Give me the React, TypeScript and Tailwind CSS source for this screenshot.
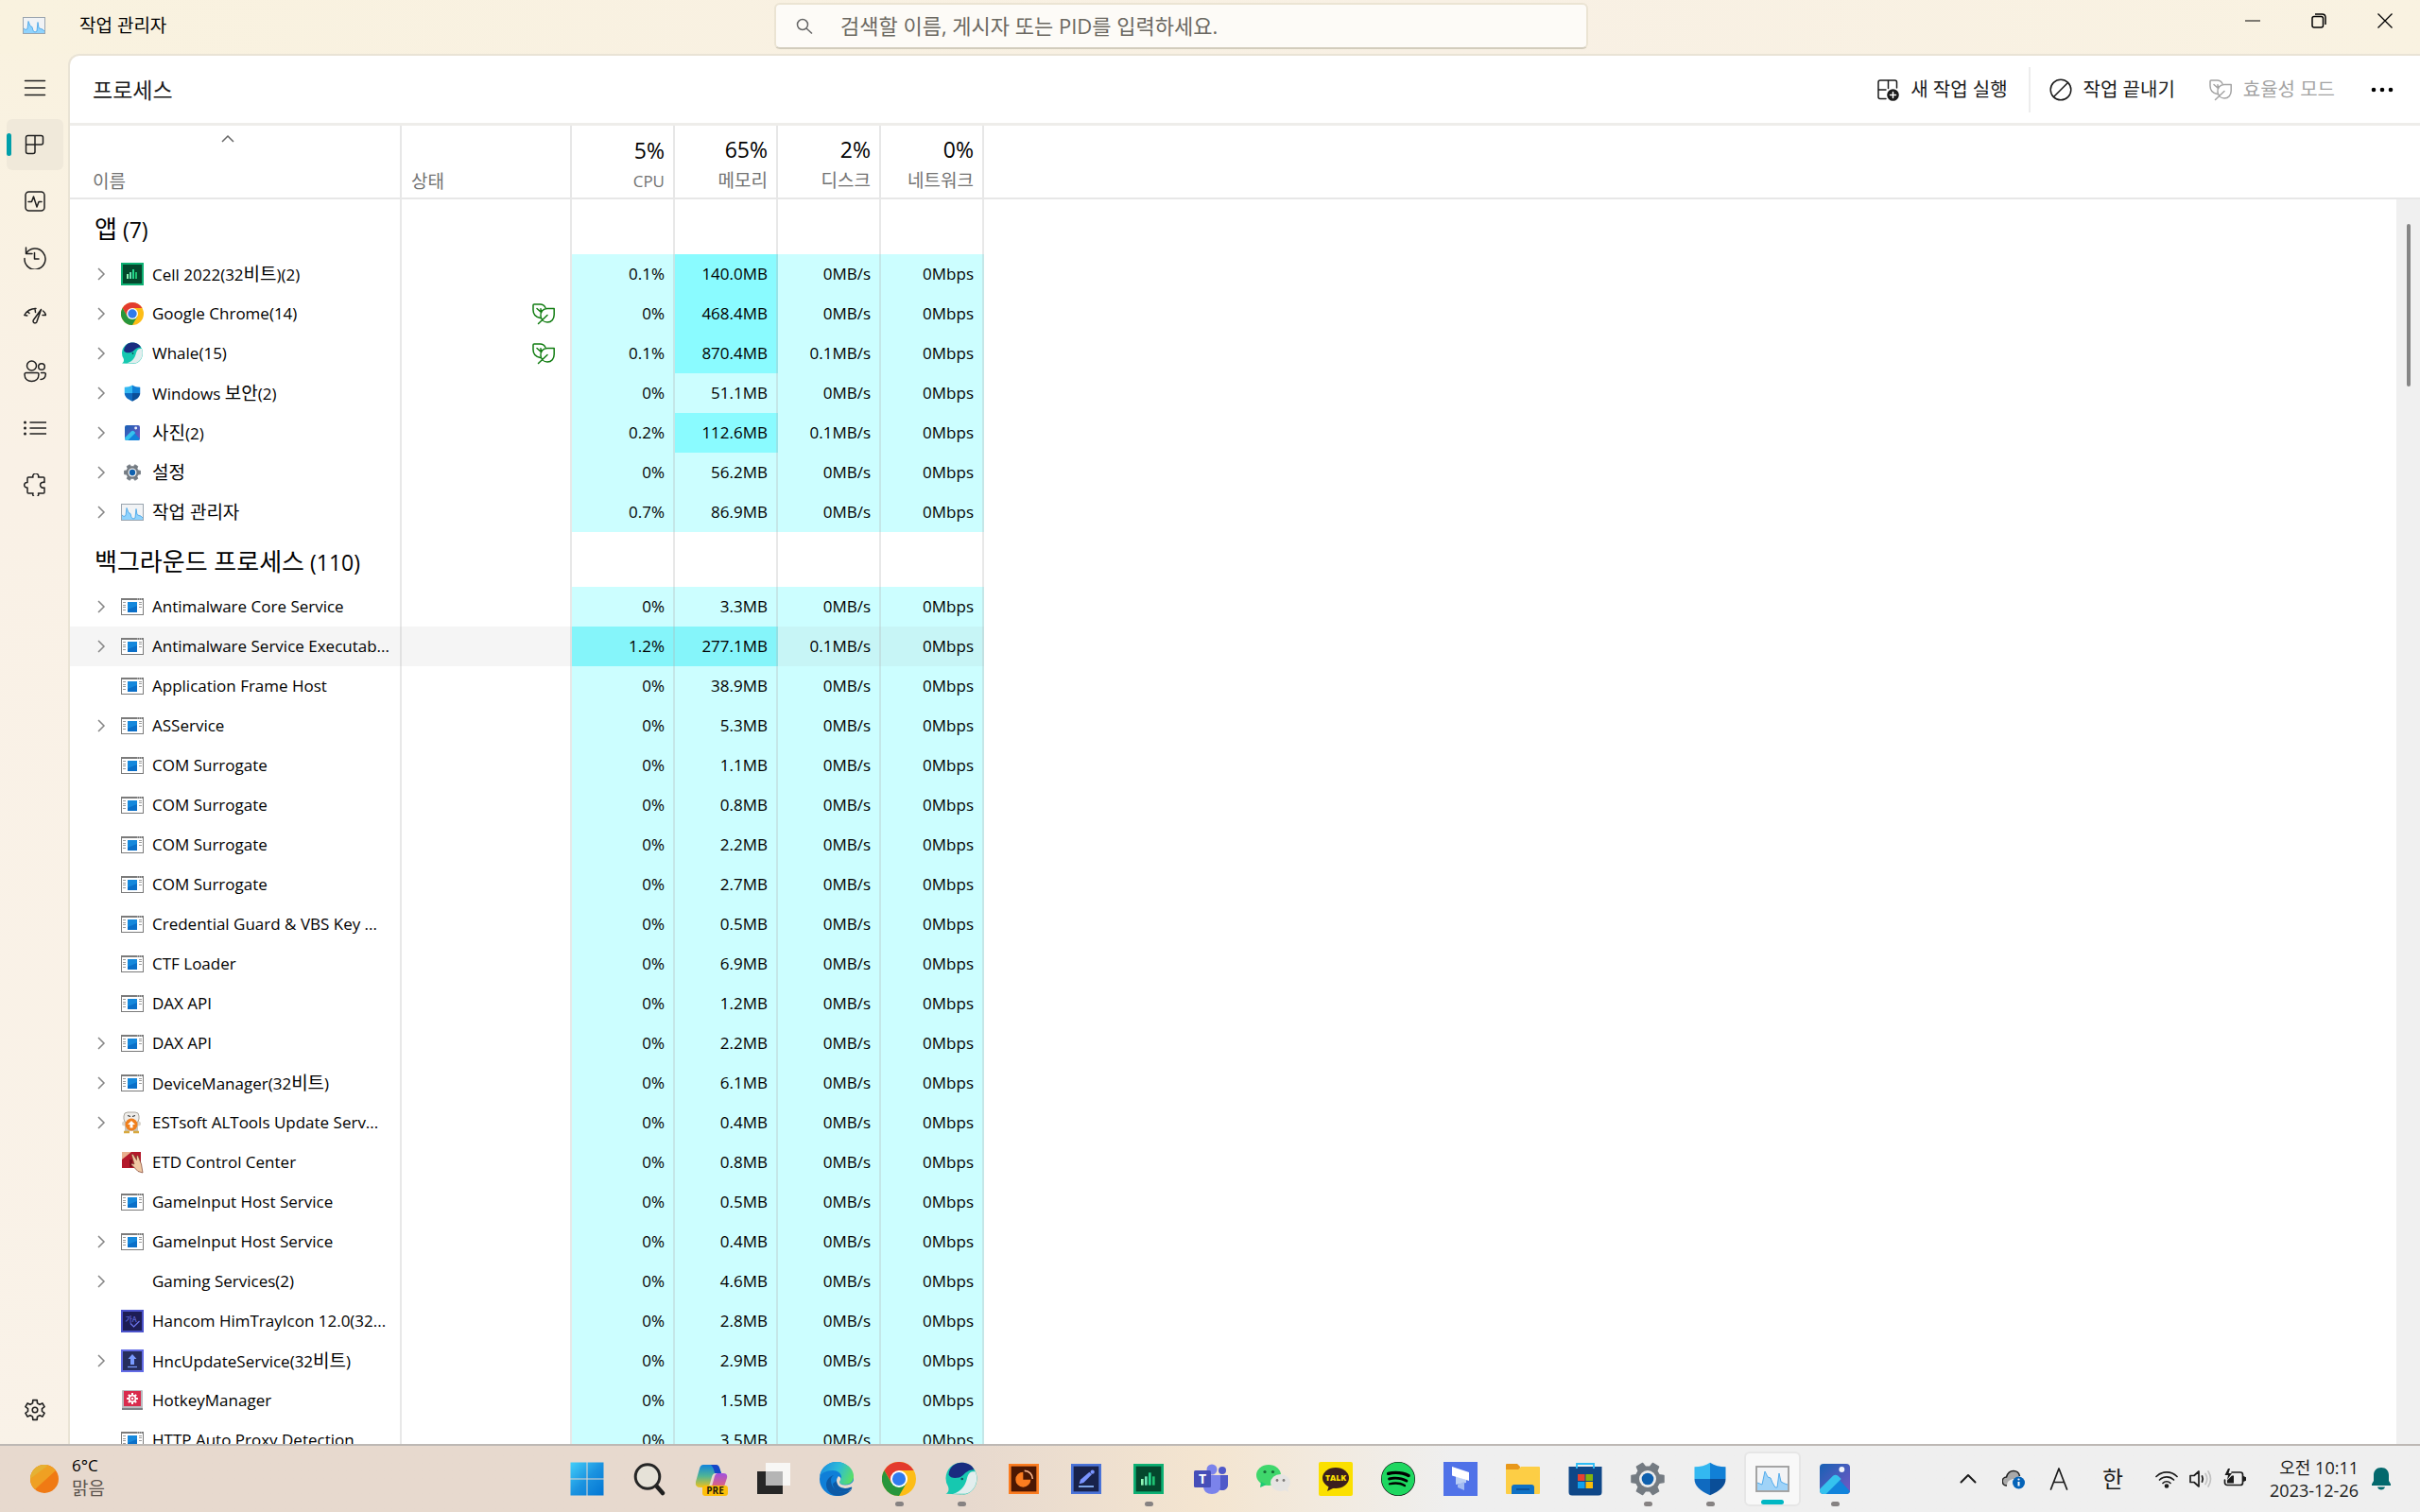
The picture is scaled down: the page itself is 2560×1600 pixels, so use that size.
import React, { useState } from "react";
import { FaSpotify } from "react-icons/fa";

type IconProps = {
  className?: string;
};

type ProcessProps = {
  name: string;
  icon: string;
  expandable?: boolean;
  eco?: boolean;
  cpu: string;
  memory: string;
  disk?: string;
  network?: string;
  hovered?: boolean;
};

const apps: ProcessProps[] = [
  { name: "Cell 2022(32비트)(2)", icon: "cell", expandable: true, cpu: "0.1%", memory: "140.0MB" },
  { name: "Google Chrome(14)", icon: "chrome", expandable: true, eco: true, cpu: "0%", memory: "468.4MB" },
  { name: "Whale(15)", icon: "whale", expandable: true, eco: true, cpu: "0.1%", memory: "870.4MB", disk: "0.1MB/s" },
  { name: "Windows 보안(2)", icon: "shield", expandable: true, cpu: "0%", memory: "51.1MB" },
  { name: "사진(2)", icon: "photos", expandable: true, cpu: "0.2%", memory: "112.6MB", disk: "0.1MB/s" },
  { name: "설정", icon: "gear", expandable: true, cpu: "0%", memory: "56.2MB" },
  { name: "작업 관리자", icon: "taskmgr", expandable: true, cpu: "0.7%", memory: "86.9MB" },
];

const background: ProcessProps[] = [
  { name: "Antimalware Core Service", icon: "exe", expandable: true, cpu: "0%", memory: "3.3MB" },
  { name: "Antimalware Service Executab...", icon: "exe", expandable: true, cpu: "1.2%", memory: "277.1MB", disk: "0.1MB/s", hovered: true },
  { name: "Application Frame Host", icon: "exe", cpu: "0%", memory: "38.9MB" },
  { name: "ASService", icon: "exe", expandable: true, cpu: "0%", memory: "5.3MB" },
  { name: "COM Surrogate", icon: "exe", cpu: "0%", memory: "1.1MB" },
  { name: "COM Surrogate", icon: "exe", cpu: "0%", memory: "0.8MB" },
  { name: "COM Surrogate", icon: "exe", cpu: "0%", memory: "2.2MB" },
  { name: "COM Surrogate", icon: "exe", cpu: "0%", memory: "2.7MB" },
  { name: "Credential Guard & VBS Key ...", icon: "exe", cpu: "0%", memory: "0.5MB" },
  { name: "CTF Loader", icon: "exe", cpu: "0%", memory: "6.9MB" },
  { name: "DAX API", icon: "exe", cpu: "0%", memory: "1.2MB" },
  { name: "DAX API", icon: "exe", expandable: true, cpu: "0%", memory: "2.2MB" },
  { name: "DeviceManager(32비트)", icon: "exe", expandable: true, cpu: "0%", memory: "6.1MB" },
  { name: "ESTsoft ALTools Update Serv...", icon: "altools", expandable: true, cpu: "0%", memory: "0.4MB" },
  { name: "ETD Control Center", icon: "etd", cpu: "0%", memory: "0.8MB" },
  { name: "GameInput Host Service", icon: "exe", cpu: "0%", memory: "0.5MB" },
  { name: "GameInput Host Service", icon: "exe", expandable: true, cpu: "0%", memory: "0.4MB" },
  { name: "Gaming Services(2)", icon: "none", expandable: true, cpu: "0%", memory: "4.6MB" },
  { name: "Hancom HimTrayIcon 12.0(32...", icon: "him", cpu: "0%", memory: "2.8MB" },
  { name: "HncUpdateService(32비트)", icon: "hnc", expandable: true, cpu: "0%", memory: "2.9MB" },
  { name: "HotkeyManager", icon: "hotkey", cpu: "0%", memory: "1.5MB" },
  { name: "HTTP Auto Proxy Detection", icon: "exe", cpu: "0%", memory: "3.5MB" },
];

const gearPath = (teeth: number, outer: number, inner: number) => {
  const step = (Math.PI * 2) / teeth;
  const points: string[] = [];
  for (let i = 0; i < teeth; i++) {
    const a = i * step - Math.PI / 2;
    [
      [-0.32, inner],
      [-0.2, outer],
      [0.2, outer],
      [0.32, inner],
    ].forEach(([offset, r]) => {
      const t = a + offset * step;
      points.push(`${(12 + r * Math.cos(t)).toFixed(2)} ${(12 + r * Math.sin(t)).toFixed(2)}`);
    });
  }
  return `M${points.join("L")}Z`;
};

/* line icons */

function Line({ className = "size-6", children, width = 1.5 }: { className?: string; children: React.ReactNode; width?: number }) {
  return (
    <svg
      viewBox="0 0 24 24"
      className={className}
      fill="none"
      stroke="currentColor"
      strokeWidth={width}
      strokeLinecap="round"
      strokeLinejoin="round"
      aria-hidden="true"
    >
      {children}
    </svg>
  );
}

const MenuIcon = () => (
  <Line>
    <path d="M1.5 4.5h21M1.5 12h21M1.5 19.5h21" />
  </Line>
);

const ProcessesIcon = () => (
  <Line>
    <path d="M2.5 4.5a2 2 0 0 1 2-2h14a2 2 0 0 1 2 2V10a2 2 0 0 1-2 2H12v7.5a2 2 0 0 1-2 2H4.5a2 2 0 0 1-2-2zM2.5 12H12M12 2.5V12" />
  </Line>
);

const PerformanceIcon = () => (
  <Line>
    <rect x="2" y="2" width="20" height="20" rx="3.5" />
    <path d="M5 12.500h3.500l2-5.500 3.500 11 2-5.500h3" />
  </Line>
);

const HistoryIcon = () => (
  <Line>
    <path d="M2.500 1v6.500H9M2.500 7.500A11 11 0 1 1 1 12.500M11.500 6.500V13H16" />
  </Line>
);

const StartupIcon = () => (
  <Line>
    <path d="M.8 12.500l3 .5M.8 12.500C3 8.500 7 5.500 13 5.500M4 8.500l2 2M12 5.500l.500 4M20.500 8c1.500 1 2.500 2.500 3 4.500l-3.500 0" />
    <path d="M18.500 6.500L10.300 17.800a2 2 0 0 0 3.500 2z" />
  </Line>
);

const UsersIcon = () => (
  <Line>
    <circle cx="8.5" cy="6" r="5" />
    <circle cx="19" cy="7" r="3.3" />
    <path d="M2.500 13.500h12a1.500 1.500 0 0 1 1.500 1.500c0 5-3.500 7.500-7.500 7.500S1 20 1 15a1.500 1.500 0 0 1 1.500-1.500zM18.500 13.500H22a1.300 1.300 0 0 1 1.300 1.500c-.3 4-3 5.500-5.300 5.500" />
  </Line>
);

const DetailsIcon = () => (
  <Line>
    <path d="M7 6h17M7 12h17M7 18h17" />
    <g fill="currentColor" stroke="none">
      <circle cx="1.5" cy="6" r="1.5" />
      <circle cx="1.5" cy="12" r="1.5" />
      <circle cx="1.5" cy="18" r="1.5" />
    </g>
  </Line>
);

const ServicesIcon = () => (
  <Line>
    <path d="M5 4h5a3 2.800 0 1 1 5.500 0h5.500a1 1 0 0 1 1 1v4.500a3.200 3 0 1 0 0 5.500v5a1 1 0 0 1-1 1h-5.500a3 2.800 0 1 1-5.500 0H5a1 1 0 0 1-1-1v-5a2.800 2.800 0 1 1 0-5.500V5a1 1 0 0 1 1-1z" />
  </Line>
);

const SettingsIcon = () => (
  <Line>
    <path d={gearPath(6, 10.6, 7.6)} strokeWidth="1.6" />
    <circle cx="12" cy="12" r="2.8" />
  </Line>
);

const LeafIcon = ({ className }: IconProps) => (
  <Line className={className}>
    <path d="M8.500 16.500C3.500 15.500 1 12.500 1 8V3a1 1 0 0 1 1-1h6.500c2.500 0 4.500 1.500 5.500 3.500" />
    <path d="M5 6.500l4.500 4M9 6.800l.5 3.700M23.200 6.500H16c-4.500 0-7.500 3.500-7 8 .4 3.500 3 6.500 7 6.500 4.500 0 7.200-3.500 7.200-8zM6.500 22.500l9.500-9" />
  </Line>
);

const NewTaskIcon = () => (
  <Line>
    <path d="M10 21.500H4a2 2 0 0 1-2-2V4a2 2 0 0 1 2-2h15.500a2 2 0 0 1 2 2v6M2 12h8M12.500 2v8.500" />
    <circle cx="17.5" cy="17.5" r="6.3" fill="currentColor" stroke="none" />
    <path d="M17.500 14.500v6M14.500 17.500h6" stroke="#fff" />
  </Line>
);

const EndTaskIcon = () => (
  <Line>
    <circle cx="12" cy="12" r="10.8" />
    <path d="M4.500 19.500l15-15" />
  </Line>
);

const Chevron = () => (
  <svg viewBox="0 0 12 16" className="h-4 w-3" fill="none" stroke="#858585" strokeWidth="1.5" aria-hidden="true">
    <path d="M2 2l6 6-6 6" />
  </svg>
);

/* colour icons */

const TaskManagerLogo = ({ className = "size-6" }: IconProps) => (
  <svg viewBox="0 0 24 24" className={className} aria-hidden="true">
    <rect x=".5" y="3.5" width="23" height="17" fill="#f1f3f5" stroke="#9aa5af" />
    <path d="M1 15l2 1.500 2-1 1-8 2 5 2 1 1 4 2 1.500 2-1 1-9.500 1 6 2 1 2 .500 2 2V20H1z" fill="#8fd3fd" />
    <path d="M1 15l2 1.500 2-1 1-8 2 5 2 1 1 4 2 1.500 2-1 1-9.500 1 6 2 1 2 .500 2 2" fill="none" stroke="#3f9fe6" strokeWidth=".8" />
  </svg>
);

const ExeLogo = ({ className = "size-6" }: IconProps) => (
  <svg viewBox="0 0 24 24" className={className} aria-hidden="true">
    <rect x=".5" y="3.5" width="23" height="17" fill="#fff" stroke="#7b7b7b" />
    <path d="M0 3h24v2H0z" fill="#7b7b7b" />
    <path d="M17 4h1M19 4h1M21 4h1" stroke="#ddd" />
    <path d="M2 7.500h3M2 10.500h3M2 12.500h3M2 15.500h3M19 7.500h3M19 9.500h3M19 12.500h3" stroke="#9a9a9a" />
    <rect x="7" y="7" width="10" height="11" fill="#0a6fc8" />
    <path d="M7 7h10v4L7 15z" fill="#1588dc" />
  </svg>
);

const CellLogo = ({ className = "size-6" }: IconProps) => (
  <svg viewBox="0 0 24 24" className={className} aria-hidden="true">
    <path d="M0 0h24v24H0z" fill="#0db073" />
    <path d="M2 2h20v20H2z" fill="#04482d" />
    <path d="M6 12h2v5H6z" fill="#8df5b4" />
    <path d="M9 10h2v7H9z" fill="#6be3b4" />
    <path d="M12 7h2v10h-2z" fill="#24d68c" />
    <path d="M15 10h2v7h-2z" fill="#1fc271" />
  </svg>
);

const ShowLogo = ({ className }: IconProps) => (
  <svg viewBox="0 0 24 24" className={className} aria-hidden="true">
    <path d="M0 0h24v24H0z" fill="#fb7c20" />
    <path d="M2 2h20v20H2z" fill="#4b1703" />
    <path d="M11.500 6.500v6h6a6 6 0 1 1-6-6z" fill="#fb7c20" />
    <path d="M12.500 5.500a6.500 6.500 0 0 1 6.500 6.500" fill="none" stroke="#fbb489" strokeWidth="1.2" />
  </svg>
);

const WordLogo = ({ className }: IconProps) => (
  <svg viewBox="0 0 24 24" className={className} aria-hidden="true">
    <path d="M0 0h24v24H0z" fill="#4a73d8" />
    <path d="M2 2h20v20H2z" fill="#18224b" />
    <path d="M6.500 16l1-3.500 7-6 2 2-6.500 6.500z" fill="#7a94ff" />
    <circle cx="17" cy="6.500" r="1.600" fill="#7a94ff" />
    <path d="M6 18h12" stroke="#8cb9ff" strokeWidth="1.3" />
  </svg>
);

const ChromeLogo = ({ className = "size-6" }: IconProps) => (
  <svg viewBox="0 0 24 24" className={className} aria-hidden="true">
    <circle cx="12" cy="12" r="12" fill="#fdbd16" />
    <path d="M12 6h10.400A12 12 0 0 0 1.600 6L7 15z" fill="#e33b2e" />
    <path d="M1.600 6A12 12 0 0 0 12 24l5.200-9H12L6.800 15z" fill="#27963c" />
    <circle cx="12" cy="12" r="6" fill="#fff" />
    <circle cx="12" cy="12" r="4.7" fill="#2f7bee" />
  </svg>
);

const WhaleLogo = ({ className = "size-6" }: IconProps) => (
  <svg viewBox="0 0 24 24" className={className} aria-hidden="true">
    <path d="M1 11.500a11 11 0 0 1 22 0c0 6-4 11-9 11.500L1 22.500c2-1 2.500-3 1.500-5.500Q1 15 1 11.500z" fill="#16c8b0" />
    <path d="M22 7c2.500 7-1 14-7 15.500H6c7-2 9-7 10-11s3-5 6-4.500z" fill="#e2eeee" />
    <path d="M3 9C3.500 3 8 .5 12 .5S19.500 2 21 5.500c-4 0-6 2-8 4S4.500 12.500 3 9z" fill="#1a2c80" />
    <circle cx="12.500" cy="12" r=".9" fill="#0d5560" />
  </svg>
);

const ShieldLogo = ({ className = "size-6" }: IconProps) => (
  <svg viewBox="0 0 24 24" className={className} aria-hidden="true">
    <path d="M12 .5v11.500H1V3.500C5 3.500 9 2.500 12 .5z" fill="#33b8f1" />
    <path d="M12 .5v11.500h11V3.500C19 3.500 15 2.500 12 .5z" fill="#1180d6" />
    <path d="M1 12h11v11.500C5 20.500 1 17 1 12z" fill="#0f6ac0" />
    <path d="M23 12H12v11.500C19 20.500 23 17 23 12z" fill="#0a4e98" />
  </svg>
);

const PhotosLogo = ({ className = "size-6" }: IconProps) => (
  <svg viewBox="0 0 24 24" className={className} aria-hidden="true">
    <defs>
      <linearGradient id="photos" x1="0" y1="0" x2="1" y2="1">
        <stop offset="0" stopColor="#1761b4" />
        <stop offset="1" stopColor="#7758c5" />
      </linearGradient>
      <clipPath id="photosClip">
        <rect width="24" height="24" rx="3" />
      </clipPath>
    </defs>
    <g clipPath="url(#photosClip)">
      <path d="M0 0h24v24H0z" fill="url(#photos)" />
      <path d="M11 10.500l2.500 0L26 24H4z" fill="#1183db" />
      <path d="M-1 21L10.500 9.500q2-1.500 4 0l2.500 2.500L5 24H0z" fill="#35c2ee" />
    </g>
    <circle cx="17.5" cy="4.5" r="2.2" fill="#f0f3fb" />
  </svg>
);

const GearLogo = ({ className = "size-6" }: IconProps) => (
  <svg viewBox="0 0 24 24" className={className} aria-hidden="true">
    <g transform="rotate(30 12 12)">
      <path d={gearPath(6, 11.6, 8.6)} fill="#747b82" stroke="#747b82" strokeLinejoin="round" />
    </g>
    <circle cx="12" cy="12" r="6" fill="#ededed" />
    <circle cx="12" cy="12" r="4.2" fill="#0e60ae" />
  </svg>
);

const AltoolsLogo = () => (
  <svg viewBox="0 0 24 24" className="size-6" aria-hidden="true">
    <circle cx="3.500" cy="13" r="2.500" fill="#d8d4cc" />
    <circle cx="18.500" cy="13" r="2.500" fill="#d8d4cc" />
    <path d="M4 10h14v11H4z" fill="#c9c4ba" />
    <rect x="3" y="1" width="16" height="11" rx="4" fill="#efedea" stroke="#aaa59c" />
    <path d="M3 22h6M13 22h6" stroke="#d8a93e" strokeWidth="2.5" />
    <circle cx="11" cy="14" r="6.5" fill="#f07f1c" />
    <path d="M11 10l4 4h-2.500v3.500h-3V14H7z" fill="#fff" />
    <path d="M7 4.500l3 1M12 5.500l3-1" stroke="#333" strokeWidth="1.3" />
  </svg>
);

const EtdLogo = () => (
  <svg viewBox="0 0 24 24" className="size-6" aria-hidden="true">
    <path d="M1 1h20v17H1z" fill="#b3182b" />
    <path d="M1 1h10L1 9z" fill="#e9b08f" />
    <path d="M9 9h3v8H9z" fill="#7d0f1d" />
    <path d="M11 3.500q1.500-1 2.500 1l3 5V5q1.500-1 2 1l3 8 1.500 9-5-1.500-7-7q0-2 3-.500z" fill="#f0c9a4" stroke="#7a3b2a" strokeWidth=".7" />
  </svg>
);

const HimLogo = () => (
  <svg viewBox="0 0 24 24" className="size-6" aria-hidden="true">
    <rect x="1" y="1" width="22" height="22" fill="#1d1d55" stroke="#4b53cb" strokeWidth="2" />
    <text x="4.500" y="12.500" fontSize="8" fontFamily="Noto Sans CJK KR" fill="#6f78ee">
      가A
    </text>
    <path d="M10 14.500l3.500 3.500 6-6" fill="none" stroke="#6f78ee" strokeWidth="1.2" />
  </svg>
);

const HncLogo = () => (
  <svg viewBox="0 0 24 24" className="size-6" aria-hidden="true">
    <rect x="1" y="1" width="22" height="22" fill="#262d5e" stroke="#626be6" strokeWidth="2" />
    <path d="M12 5l4.500 5H14v6h-4v-6H7.500z" fill="#7a9bff" />
    <path d="M7 18.500h10" stroke="#7a9bff" strokeWidth="1.2" />
  </svg>
);

const HotkeyLogo = () => (
  <svg viewBox="0 0 24 24" className="size-6" aria-hidden="true">
    <rect x="1" y="1" width="22" height="21" rx="1" fill="#b9bcc0" />
    <path d="M1 20h22v2H1z" fill="#7c8085" />
    <path d="M3 2h18v16H3z" fill="#d92b4d" />
    <g transform="translate(6 4) scale(.5)">
      <path d={gearPath(8, 12, 8.5)} fill="#fff" />
      <circle cx="12" cy="12" r="5" fill="#d92b4d" />
      <circle cx="12" cy="12" r="2.5" fill="#fff" />
    </g>
  </svg>
);

function ProcessIcon({ icon }: { icon: string }) {
  switch (icon) {
    case "cell":
      return <CellLogo />;
    case "chrome":
      return <ChromeLogo />;
    case "whale":
      return <WhaleLogo />;
    case "shield":
      return <ShieldLogo className="size-[18px]" />;
    case "photos":
      return <PhotosLogo className="size-4" />;
    case "gear":
      return <GearLogo className="size-[18px]" />;
    case "taskmgr":
      return <TaskManagerLogo />;
    case "altools":
      return <AltoolsLogo />;
    case "etd":
      return <EtdLogo />;
    case "him":
      return <HimLogo />;
    case "hnc":
      return <HncLogo />;
    case "hotkey":
      return <HotkeyLogo />;
    case "none":
      return null;
    default:
      return <ExeLogo />;
  }
}

/* taskbar logos */

const StartLogo = () => (
  <svg viewBox="0 0 36 36" className="size-9" aria-hidden="true">
    <defs>
      <linearGradient id="start" x1="0" y1="0" x2="36" y2="36" gradientUnits="userSpaceOnUse">
        <stop offset="0" stopColor="#43d0fa" />
        <stop offset=".5" stopColor="#1b93e0" />
        <stop offset="1" stopColor="#0275d3" />
      </linearGradient>
    </defs>
    <path d="M.5.5h17v17H.5zM18.500.5h17v17h-17zM.5 18.500h17v17H.5zM18.500 18.500h17v17h-17z" fill="url(#start)" />
  </svg>
);

const SearchLogo = () => (
  <svg viewBox="0 0 36 36" className="size-9" aria-hidden="true">
    <path d="M25 25l7 8" stroke="#1f1f1f" strokeWidth="4.5" strokeLinecap="round" />
    <circle cx="16" cy="15.500" r="12.800" fill="#e6e2d8" stroke="#262626" strokeWidth="3" />
  </svg>
);

const CopilotLogo = () => (
  <svg viewBox="0 0 36 36" className="size-9" aria-hidden="true">
    <defs>
      <linearGradient id="copilotLeft" x1="0" y1="0" x2="0" y2="1">
        <stop offset="0" stopColor="#1184dc" />
        <stop offset=".5" stopColor="#4fb595" />
        <stop offset="1" stopColor="#f0c21c" />
      </linearGradient>
      <linearGradient id="copilotRight" x1="0" y1="0" x2="0" y2="1">
        <stop offset="0" stopColor="#a04fe0" />
        <stop offset="1" stopColor="#f26b60" />
      </linearGradient>
    </defs>
    <path d="M9 3h13q3 0 4 3l2 6h-6q-3 0-4 4l-2 7q-1 4-5 4H6q-6 0-5-6L5 7q1-4 4-4z" fill="url(#copilotLeft)" />
    <path d="M17 3h5q3 0 4 3l2 6h-7q-1-6-4-9z" fill="#1546c8" />
    <path d="M24 12h6q5 0 4 5l-3 9q-1 4-5 4H14q3-1 4-4l3-11q1-3 3-3z" fill="url(#copilotRight)" />
    <rect x="8" y="25" width="27" height="11" rx="3" fill="#fdbf0b" />
    <text x="21.5" y="34" textAnchor="middle" fontSize="10" fontWeight="700" fontFamily="Open Sans" fill="#1f1a0c">
      PRE
    </text>
  </svg>
);

const TaskViewLogo = () => (
  <svg viewBox="0 0 36 36" className="size-9" aria-hidden="true">
    <path d="M0 10h27v24H0z" fill="#262626" />
    <path d="M9 1h26v24H9z" fill="#fafafa" fillOpacity=".9" />
    <path d="M9 10h18v15H9z" fill="#b5b5b5" />
  </svg>
);

const EdgeLogo = () => (
  <svg viewBox="0 0 36 36" className="size-9" aria-hidden="true">
    <defs>
      <linearGradient id="edge" x1="0" y1=".3" x2="1" y2=".6">
        <stop offset="0" stopColor="#1b8fe0" />
        <stop offset=".5" stopColor="#2cbbd8" />
        <stop offset="1" stopColor="#5be065" />
      </linearGradient>
    </defs>
    <circle cx="18" cy="18" r="18" fill="#0f7fd8" />
    <path d="M0 16C1 6 9 0 18 0c10 0 18 7 18 15 0 6-4 9-9 9-4 0-6-1-6-3 0-1 2-2 2-5 0-4-4-7-9-7C7 9 1 12 0 16z" fill="url(#edge)" />
    <path d="M12 19c0 8 6 13 12 13 4 0 7-1 10-3-3 4-8 7-14 7-8 0-13-6-13-12 0-5 4-9 8-10-2 1-3 3-3 5z" fill="#0d5aa6" />
    <path d="M36 20v8l-3-1c-2 1-4 1-6 1-6 0-9-4-9-8 0-2 1-4 2-5 3 2 3 3 1 6 0 2 2 3.500 6 3.500 4 0 7-1.500 9-4.500z" fill="#e9dace" />
    <path d="M18 20c0 5 4 8 9 8 3 0 5-1 6.500-1.500q1.500.5 0 2.500c-3 2-6 3-9.500 3-6 0-10-4-10-9z" fill="#0d5aa6" />
  </svg>
);

const TeamsLogo = () => (
  <svg viewBox="0 0 36 36" className="size-9" aria-hidden="true">
    <circle cx="19" cy="8" r="5.5" fill="#7b83eb" />
    <circle cx="30" cy="9" r="4" fill="#5059c9" />
    <path d="M23 14h13v10c0 4-3 6-6 6s-7-2-7-6z" fill="#5059c9" />
    <path d="M10 14h18v12c0 5-4 8-9 8s-9-3-9-8z" fill="#7b83eb" />
    <rect y="9" width="18" height="18" rx="1.5" fill="#464eb8" />
    <text x="9" y="23" textAnchor="middle" fontSize="14" fontWeight="700" fontFamily="Open Sans" fill="#fff">
      T
    </text>
  </svg>
);

const WechatLogo = () => (
  <svg viewBox="0 0 36 36" className="size-9" aria-hidden="true">
    <ellipse cx="13" cy="14" rx="13" ry="11" fill="#3fd76c" />
    <path d="M5 21l-1 6 7-3z" fill="#1fcb72" />
    <ellipse cx="25.5" cy="22" rx="10.5" ry="9" fill="#e6e4e2" />
    <path d="M29 29l5 3-1-5z" fill="#e6e4e2" />
    <g fill="#176b36">
      <circle cx="9" cy="10.5" r="1.6" />
      <circle cx="17.5" cy="10.5" r="1.6" />
    </g>
    <g fill="#7d7b79">
      <circle cx="22" cy="19.5" r="1.4" />
      <circle cx="29" cy="19.5" r="1.4" />
    </g>
  </svg>
);

const KakaoLogo = () => (
  <svg viewBox="0 0 36 36" className="size-9" aria-hidden="true">
    <rect width="36" height="36" rx="2" fill="#fbe000" />
    <ellipse cx="18" cy="17" rx="14" ry="11" fill="#3b1e1e" />
    <path d="M11 25l-2 6 8-4z" fill="#3b1e1e" />
    <text x="18" y="20" textAnchor="middle" fontSize="8.5" fontWeight="800" fontFamily="Open Sans" fill="#fbe000">
      TALK
    </text>
  </svg>
);

const SpotifyLogo = () => (
  <span className="flex size-9 rounded-full bg-black">
    <FaSpotify className="size-9 text-[#1ed760]" />
  </span>
);

const FlagLogo = () => (
  <svg viewBox="0 0 36 36" className="size-9" aria-hidden="true">
    <path d="M0 0h36v36H0z" fill="#5072e8" />
    <path d="M13 15l11 4v3l-11 2z" fill="#bcd0f5" />
    <path d="M15 24l7-3v9l-7-3z" fill="#a3bbf2" />
    <path d="M9 5l18 6v9L9 14.500z" fill="#fff" />
  </svg>
);

const ExplorerLogo = () => (
  <svg viewBox="0 0 36 36" className="size-9" aria-hidden="true">
    <path d="M0 3q0-1 1-1h11l3 3v7H0z" fill="#e8981a" />
    <path d="M0 8h13l3-3h19q1 0 1 1v27q0 1-1 1H1q-1 0-1-1z" fill="#fdce45" />
    <path d="M6 34v-7q0-3 3-3h18q3 0 3 3v7z" fill="#0f71c5" />
    <path d="M11 29h14" stroke="#0a4a8c" strokeWidth="1.5" />
  </svg>
);

const StoreLogo = () => (
  <svg viewBox="0 0 36 36" className="size-9" aria-hidden="true">
    <path d="M.5 5h35v27q0 3.500-3.500 3.500H4Q.5 35.500.5 32z" fill="#0f4788" />
    <path d="M9 7V2h18v5" fill="none" stroke="#2dbcf5" strokeWidth="1.8" />
    <path d="M10 13h7.500v7H10z" fill="#e8412f" />
    <path d="M18.500 13H26v7h-7.500z" fill="#84b40c" />
    <path d="M10 21h7.500v7H10z" fill="#12a0ec" />
    <path d="M18.500 21H26v7h-7.500z" fill="#fcbd08" />
  </svg>
);

const MonitorLogo = () => (
  <svg viewBox="0 0 36 36" className="size-9" aria-hidden="true">
    <rect x="1" y="5" width="34" height="26" fill="#f3f4f6" stroke="#9c9c9c" strokeWidth="1.8" />
    <path d="M2 22l5 2 3-14 3 6 3 1 2 5 3 5 2 0 2-15 2 9 4 2 3 1v6H2z" fill="#9fd3f8" />
    <path d="M2 22l5 2 3-14 3 6 3 1 2 5 3 5 2 0 2-15 2 9 4 2 3 1" fill="none" stroke="#53abeb" />
  </svg>
);

const taskbarApps = [
  { label: "시작", logo: <StartLogo /> },
  { label: "검색", logo: <SearchLogo /> },
  { label: "Copilot", logo: <CopilotLogo /> },
  { label: "작업 보기", logo: <TaskViewLogo /> },
  { label: "Edge", logo: <EdgeLogo /> },
  { label: "Chrome", logo: <ChromeLogo className="size-9" />, running: true },
  { label: "Whale", logo: <WhaleLogo className="size-9" />, running: true },
  { label: "Show", logo: <ShowLogo className="size-8" /> },
  { label: "Word", logo: <WordLogo className="size-8" /> },
  { label: "Cell", logo: <CellLogo className="size-8" />, running: true },
  { label: "Teams", logo: <TeamsLogo /> },
  { label: "WeChat", logo: <WechatLogo /> },
  { label: "KakaoTalk", logo: <KakaoLogo /> },
  { label: "Spotify", logo: <SpotifyLogo /> },
  { label: "Papago", logo: <FlagLogo /> },
  { label: "파일 탐색기", logo: <ExplorerLogo /> },
  { label: "Store", logo: <StoreLogo /> },
  { label: "설정", logo: <GearLogo className="size-9" />, running: true },
  { label: "Windows 보안", logo: <ShieldLogo className="size-9" />, running: true },
  { label: "작업 관리자", logo: <MonitorLogo />, running: true, active: true },
  { label: "사진", logo: <PhotosLogo className="size-8" />, running: true },
];

const navItems = [
  { label: "탐색 열기", icon: <MenuIcon /> },
  { label: "프로세스", icon: <ProcessesIcon /> },
  { label: "성능", icon: <PerformanceIcon /> },
  { label: "앱 기록", icon: <HistoryIcon /> },
  { label: "시작 앱", icon: <StartupIcon /> },
  { label: "사용자", icon: <UsersIcon /> },
  { label: "세부 정보", icon: <DetailsIcon /> },
  { label: "서비스", icon: <ServicesIcon /> },
];

// Hangul runs are set a little larger than the Latin text around them
function Mixed({ text, className }: { text: string; className: string }) {
  return (
    <>
      {text.split(/([가-힣]+(?: [가-힣]+)*)/).map((part, i) =>
        i % 2 ? (
          <span key={i} className={className}>
            {part}
          </span>
        ) : (
          part
        )
      )}
    </>
  );
}

function Value({ text, hot, hovered }: { text: string; hot?: boolean; hovered?: boolean }) {
  const color = hot
    ? hovered
      ? "bg-[#85f5fa]"
      : "bg-[#8afbff]"
    : hovered
      ? "bg-[#c7f5f6]"
      : "bg-[#ccfeff]";
  return (
    <td className={`border-r-2 border-[#b4b4b4]/30 p-0 pr-[9px] text-right ${color}`}>{text}</td>
  );
}

function ProcessRow({ process }: { process: ProcessProps }) {
  const { name, icon, expandable, eco, cpu, memory, disk = "0MB/s", network = "0Mbps", hovered } = process;
  return (
    <tr className="h-[42px]">
      <td className={`border-r-2 border-[#b4b4b4]/30 p-0 ${hovered ? "bg-[#f5f5f5]" : ""}`}>
        <div className="flex h-10 items-center overflow-hidden pl-6 whitespace-nowrap">
          <div className="w-[30px] shrink-0 pl-1">
            {expandable && (
              <button type="button" aria-label={`${name} 펼치기`} className="block">
                <Chevron />
              </button>
            )}
          </div>
          <span className="mr-[9px] flex size-6 shrink-0 items-center justify-center">
            <ProcessIcon icon={icon} />
          </span>
          <span>
            <Mixed text={name} className="text-[19px]" />
          </span>
        </div>
      </td>
      <td className={`border-r-2 border-[#b4b4b4]/30 p-0 pr-4 ${hovered ? "bg-[#f5f5f5]" : ""}`}>
        {eco && <LeafIcon className="ml-auto size-6 text-[#107c10]" />}
      </td>
      <Value text={cpu} hot={parseFloat(cpu) > 1} hovered={hovered} />
      <Value text={memory} hot={parseFloat(memory) > 100} hovered={hovered} />
      <Value text={disk} hovered={hovered} />
      <Value text={network} hovered={hovered} />
      <td className="p-0"></td>
    </tr>
  );
}

function GroupRow({ title }: { title: string }) {
  return (
    <tr className="h-[58px]">
      <th scope="rowgroup" className="border-r-2 border-[#b4b4b4]/30 p-0 pt-1 pl-[26px] text-left text-[23px] leading-8 font-normal">
        <Mixed text={title} className="text-[26px]" />
      </th>
      <td className="border-r-2 border-[#b4b4b4]/30"></td>
      <td className="border-r-2 border-[#b4b4b4]/30"></td>
      <td className="border-r-2 border-[#b4b4b4]/30"></td>
      <td className="border-r-2 border-[#b4b4b4]/30"></td>
      <td className="border-r-2 border-[#b4b4b4]/30"></td>
      <td></td>
    </tr>
  );
}

function ProcessTable() {
  const usage = [
    { value: "5%", label: "CPU" },
    { value: "65%", label: "메모리" },
    { value: "2%", label: "디스크" },
    { value: "0%", label: "네트워크" },
  ];

  return (
    <table className="w-full table-fixed border-separate border-spacing-0 text-[17px] leading-6">
      <colgroup>
        <col className="w-[351px]" />
        <col className="w-[180px]" />
        <col className="w-[109px]" />
        <col className="w-[109px]" />
        <col className="w-[109px]" />
        <col className="w-[109px]" />
        <col />
      </colgroup>
      <thead>
        <tr className="h-[78px] text-[#737373]">
          <th className="border-r-2 border-b-2 border-[#e7e7e7] p-0 align-bottom font-normal">
            <div className="flex h-[76px] flex-col justify-between pt-2 pb-[5px]">
              <svg viewBox="0 0 14 12" className="mr-4 h-3 w-3.5 self-center" fill="none" stroke="#666" strokeWidth="1.5" aria-hidden="true">
                <path d="M1 9l6-6 6 6" />
              </svg>
              <button type="button" className="pl-6 text-left text-[19px] leading-6">
                이름
              </button>
            </div>
          </th>
          <th className="border-r-2 border-b-2 border-[#e7e7e7] p-0 pb-[5px] pl-[10px] text-left align-bottom text-[19px] leading-6 font-normal">
            상태
          </th>
          {usage.map((u) => (
            <th key={u.label} className="border-r-2 border-b-2 border-[#e7e7e7] p-0 pr-[9px] pb-[5px] text-right align-bottom font-normal">
              <div className="pb-[5px] text-[23px] leading-8 text-black">{u.value}</div>
              <div className="leading-6 whitespace-nowrap">
                <Mixed text={u.label} className="text-[19px]" />
              </div>
            </th>
          ))}
          <th className="border-b-2 border-[#e7e7e7] p-0"></th>
        </tr>
      </thead>
      <tbody>
        <GroupRow title="앱 (7)" />
        {apps.map((p) => (
          <ProcessRow key={p.name} process={p} />
        ))}
        <GroupRow title="백그라운드 프로세스 (110)" />
        {background.map((p, i) => (
          <ProcessRow key={i} process={p} />
        ))}
      </tbody>
    </table>
  );
}

function TitleBar() {
  const [query, setQuery] = useState("");
  return (
    <header className="grid h-[57px] shrink-0 grid-cols-[819fr_861px_880fr] bg-linear-to-r from-[#f9f2df] via-[#f8f0e4] via-60% to-[#f9f2e1]">
      <div className="flex h-[54px] items-center pl-6">
        <TaskManagerLogo />
        <span className="pl-9 text-[19px]">작업 관리자</span>
      </div>
      <label className="mt-[3px] flex h-[49px] items-center rounded-md border-2 border-[#ebe4d3] border-b-[#d2ccbc] bg-[#fdfbf7] pl-5">
        <svg viewBox="0 0 20 20" className="size-5 text-[#666]" fill="none" stroke="currentColor" strokeWidth="1.5" aria-hidden="true">
          <circle cx="8" cy="8" r="5.5" />
          <path d="M12 12l6 5.500" />
        </svg>
        <input
          type="text"
          value={query}
          aria-label="검색"
          placeholder="검색할 이름, 게시자 또는 PID를 입력하세요."
          className="ml-7 flex-1 bg-transparent text-[22px] outline-none placeholder:text-[#6b6861]"
          onChange={(e) => setQuery(e.target.value)}
        />
      </label>
      <div className="flex h-11 justify-end pr-0.5">
        <button type="button" aria-label="최소화" className="flex w-[70px] items-center justify-center">
          <Line className="size-4">
            <path d="M0 12h24" />
          </Line>
        </button>
        <button type="button" aria-label="이전 크기로 복원" className="flex w-[70px] items-center justify-center">
          <svg viewBox="0 0 16 16" className="size-4" fill="none" stroke="#000" strokeWidth="1.5" aria-hidden="true">
            <rect x="1" y="3.5" width="11.5" height="11.5" rx="2" />
            <path d="M4 1h7.500q3.500 0 3.500 3.500V12" />
          </svg>
        </button>
        <button type="button" aria-label="닫기" className="flex w-[70px] items-center justify-center">
          <svg viewBox="0 0 16 16" className="size-4" stroke="#000" strokeWidth="1.3" aria-hidden="true">
            <path d="M.5.5l15 15M15.500.5l-15 15" />
          </svg>
        </button>
      </div>
    </header>
  );
}

function Sidebar() {
  return (
    <nav className="flex w-[72px] shrink-0 flex-col items-center gap-[6px] pt-[9px] pb-[9px] pl-0.5 text-[#1f1f1f]">
      {navItems.map((item, i) => (
        <button
          key={item.label}
          type="button"
          aria-label={item.label}
          className={`relative flex h-[54px] w-[60px] items-center justify-center rounded-md ${i === 1 ? "bg-[#f0e9da]" : ""}`}
        >
          {i === 1 && <span className="absolute left-0 h-6 w-[5px] rounded-full bg-[#009faa]" />}
          {item.icon}
        </button>
      ))}
      <button type="button" aria-label="설정" className="mt-auto flex h-[54px] w-[60px] items-center justify-center">
        <SettingsIcon />
      </button>
    </nav>
  );
}

function Toolbar() {
  return (
    <div className="flex h-[71px] shrink-0 items-center pr-[26px] pl-6 text-[20px] text-[#1a1a1a]">
      <h1 className="flex-1 text-[23px] leading-8">프로세스</h1>
      <button type="button" className="flex items-center gap-3 pr-[22px]">
        <NewTaskIcon />
        새 작업 실행
      </button>
      <span className="h-12 w-[2px] bg-[#ededed]" />
      <button type="button" className="flex items-center gap-3 px-5">
        <EndTaskIcon />
        작업 끝내기
      </button>
      <button type="button" disabled className="flex items-center gap-3 px-4 text-[#a3a3a3]">
        <LeafIcon className="size-6" />
        효율성 모드
      </button>
      <button type="button" aria-label="더 보기" className="flex w-12 justify-center pl-5">
        <svg viewBox="0 0 24 6" className="h-[6px] w-6 shrink-0" aria-hidden="true">
          <circle cx="3" cy="3" r="2.3" />
          <circle cx="12" cy="3" r="2.3" />
          <circle cx="21" cy="3" r="2.3" />
        </svg>
      </button>
    </div>
  );
}

function Tray() {
  return (
    <div className="flex items-center justify-end pr-[29px] text-[#1b1b1b]">
      <button type="button" aria-label="숨겨진 아이콘" className="mr-6">
        <Line width={2}>
          <path d="M4.500 15.500l7.500-7.500 7.500 7.500" />
        </Line>
      </button>
      <svg viewBox="0 0 24 24" className="mr-6 size-6" aria-hidden="true">
        <path d="M5 19a4.500 4.500 0 0 1-.5-9C6 5 9 3.500 12 3.500s6 2 6.500 5.500" fill="#a9a9a9" stroke="#222" strokeWidth="1.6" />
        <path d="M5 19c0-5 4-7 8-7l-3 7z" fill="#ececec" />
        <circle cx="17.5" cy="16" r="6.5" fill="#0463b8" />
        <path d="M17.500 15v4.500" stroke="#fff" strokeWidth="2" />
        <circle cx="17.5" cy="12.5" r="1.1" fill="#fff" />
      </svg>
      <Line className="mr-[34px] size-6" width={1.7}>
        <path d="M3.500 23L12 1l8.500 22M6.500 15.500h11" />
      </Line>
      <span className="mr-[34px] text-[24px] leading-8">한</span>
      <button type="button" aria-label="네트워크, 볼륨, 배터리" className="mr-[25px] flex gap-3">
        <Line width={1.7}>
          <path d="M1 9.500a15.500 15.500 0 0 1 22 0M4.500 13a10.500 10.500 0 0 1 15 0M8 16.500a5.500 5.500 0 0 1 8 0" />
          <circle cx="12" cy="19.5" r="1.5" fill="currentColor" />
        </Line>
        <Line width={1.7}>
          <path d="M1 8.500h4l5-4.500v16l-5-4.500H1zM13.500 9q1.500 3 0 6" />
          <path d="M17 6.500q3.500 5.500 0 11M20 4q5 8 0 16" stroke="#c2c2c2" />
        </Line>
        <Line width={1.7}>
          <path d="M9 5h9a2.500 2.500 0 0 1 2.500 2.500v8.500a2.500 2.500 0 0 1-2.500 2.500H4A2.500 2.500 0 0 1 1.500 16v-3" />
          <path d="M21.500 10v4l2-1v-2z" fill="currentColor" />
          <path d="M4 16.500v-3l5-5h2v8zM5 1L1.500 8H5l-1 5 5-7H5.500L7 1z" fill="currentColor" stroke="none" />
        </Line>
      </button>
      <button type="button" className="mr-3 text-right text-[18px] leading-6">
        <span className="block">오전 10:11</span>
        <span className="block">2023-12-26</span>
      </button>
      <svg viewBox="0 0 24 26" className="h-[26px] w-6 shrink-0" fill="#04696d" aria-hidden="true">
        <path d="M12 1c5 0 8 3.500 8 8v6l2 3.500v1.500H2v-1.500L4 15V9c0-4.500 3-8 8-8zM8 21.500h8c-.5 2-2 3-4 3s-3.500-1-4-3z" />
      </svg>
    </div>
  );
}

function Taskbar() {
  return (
    <footer className="grid h-[72px] shrink-0 grid-cols-[1fr_auto_1fr] border-t-2 border-[#bdb8b4] bg-linear-to-r from-[#e7d9ce] from-40% via-[#f4e5d0] via-50% to-[#efefef] to-60%">
      <button type="button" className="flex items-center gap-3.5 pl-8 text-left">
        <svg viewBox="0 0 30 30" className="size-[30px]" aria-hidden="true">
          <circle cx="15" cy="15" r="15" fill="#f07a14" />
          <path d="M0 15A15 15 0 0 1 27 6L5 26Q0 22 0 15z" fill="#efa023" />
          <path d="M0 15A15 15 0 0 1 19 .6L1 14z" fill="#e5b133" />
        </svg>
        <span className="pb-1 text-[17px] leading-6">
          <span className="block">6°C</span>
          <span className="block text-[19px] text-[#5c544e]">맑음</span>
        </span>
      </button>
      <div className="flex items-center gap-[6px] pl-0.5">
        {taskbarApps.map((app) => (
          <button
            key={app.label}
            type="button"
            aria-label={app.label}
            className={`relative flex h-[58px] w-[60px] items-center justify-center rounded-md ${app.active ? "border-2 border-[#e6e6e6] bg-[#f8f8f8]" : ""}`}
          >
            {app.logo}
            {app.running && (
              <span
                className={`absolute bottom-0 h-[5px] rounded-full ${app.active ? "w-6 bg-[#00b7c3]" : "w-[9px] bg-[#868282]"}`}
              />
            )}
          </button>
        ))}
      </div>
      <Tray />
    </footer>
  );
}

function App() {
  return (
    <div className="flex h-screen flex-col overflow-hidden bg-linear-to-b from-[#f9f2df] via-[#f9f1e6] via-30% to-[#f9f2e8] font-['Open_Sans','Noto_Sans_CJK_KR',sans-serif] text-black">
      <TitleBar />
      <div className="flex min-h-0 flex-1">
        <Sidebar />
        <main className="flex min-w-0 flex-1 flex-col overflow-hidden rounded-tl-xl border-t-2 border-l-2 border-[#e9e3d5] bg-white">
          <Toolbar />
          <div className="relative min-h-0 flex-1 overflow-hidden border-t-3 border-[#eeedea]">
            <ProcessTable />
            <div className="absolute top-[78px] right-0 bottom-0 w-[25px] bg-[#f0f0f0] pt-[26px]">
              <div className="mx-auto h-[172px] w-1 rounded-full bg-[#868686]" />
            </div>
          </div>
        </main>
      </div>
      <Taskbar />
    </div>
  );
}

export default App;
